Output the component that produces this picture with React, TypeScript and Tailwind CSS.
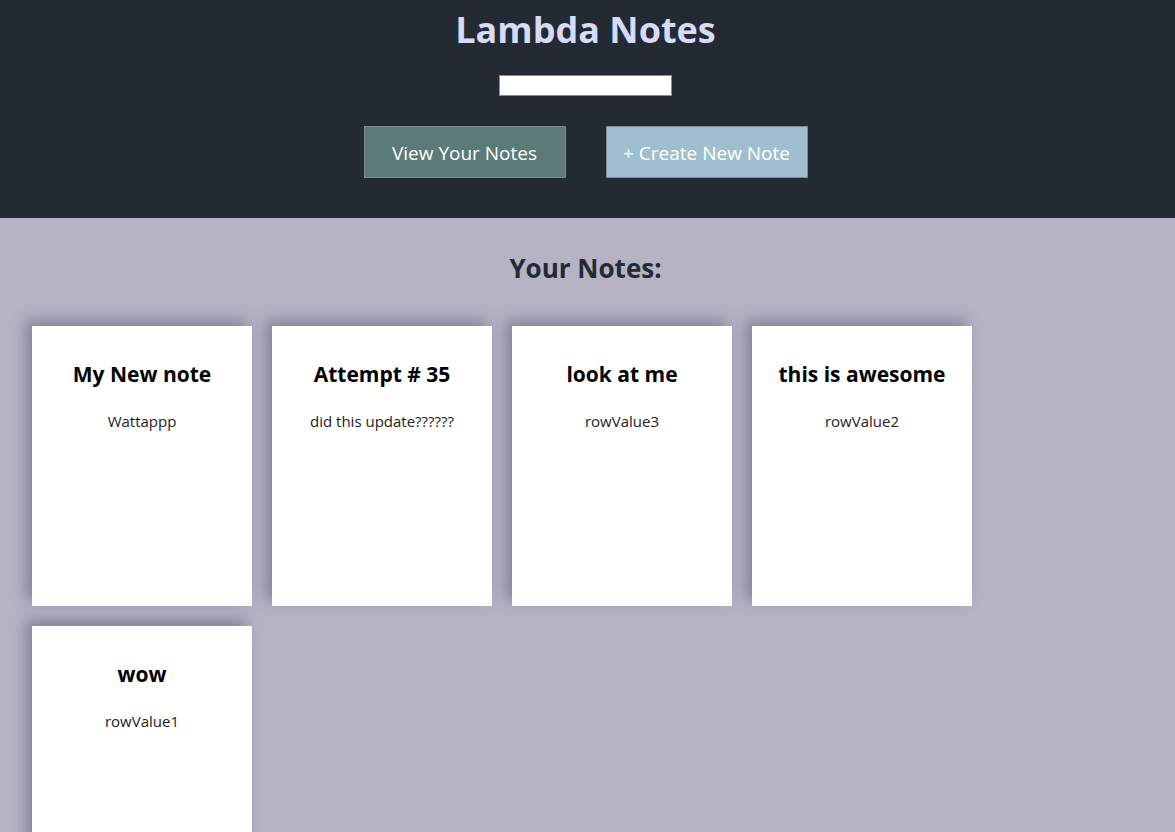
import React from "react";

const notes = [
  { title: "My New note", body: "Wattappp" },
  { title: "Attempt # 35", body: "did this update??????" },
  { title: "look at me", body: "rowValue3" },
  { title: "this is awesome", body: "rowValue2" },
  { title: "wow", body: "rowValue1" },
];

export default function App() {
  return (
    <div
      className="min-h-[832px] bg-[#b5b3c4]"
      style={{ fontFamily: '"Open Sans", "Noto Sans", sans-serif' }}
    >
      <header className="h-[218px] bg-[#232a34] flex flex-col items-center pr-[4px]">
        <h1 className="mt-[6px] h-[48px] leading-[48px] text-[36px] font-bold text-[#d8dbf7]">
          Lambda Notes
        </h1>
        <input
          type="text"
          className="mt-[21px] w-[173px] h-[21px] bg-white border border-[#8a8a8a] outline-none"
        />
        <div className="mt-[30px] flex gap-[40px]">
          <button className="w-[202px] h-[52px] pt-[3px] bg-[#5a7b78] border border-[#7f8a8c] text-white text-[19px]">
            View Your Notes
          </button>
          <button className="w-[202px] h-[52px] pt-[3px] bg-[#9fbfcf] border border-[#7f8a8c] text-white text-[19px]">
            + Create New Note
          </button>
        </div>
      </header>
      <main>
        <h2 className="pt-[32px] h-[108px] pr-[4px] text-center text-[26px] font-bold text-[#232a34] leading-[36px]">
          Your Notes:
        </h2>
        <div className="pl-[32px] flex flex-wrap gap-[20px] w-[992px]">
          {notes.map((n, i) => (
            <div
              key={i}
              className="w-[220px] h-[280px] bg-white shadow-[-6px_-6px_14px_rgba(40,35,60,0.35)] flex flex-col items-center px-2"
            >
              <div className="mt-[33px] text-[21px] font-bold text-black leading-[30px] text-center">
                {n.title}
              </div>
              <div className="mt-[22px] text-[15px] text-[#222] leading-[20px] text-center">
                {n.body}
              </div>
            </div>
          ))}
        </div>
      </main>
    </div>
  );
}
